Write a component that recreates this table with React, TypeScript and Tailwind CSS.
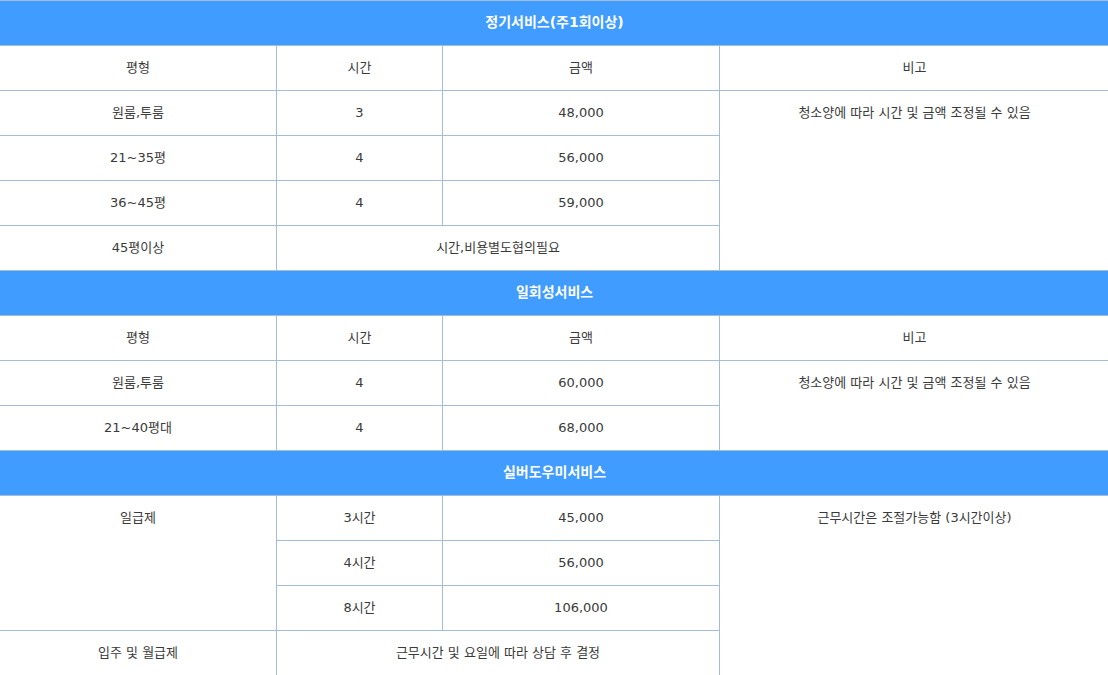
import React from "react";

const B = "border border-[#a3bdd6]";
const td = `${B} align-top text-center pt-[13px] pb-0 px-2 leading-[18px] text-[13px] text-[#3a3a3a]`;
const th = `${B} align-top text-center pt-[12px] leading-[18px] text-[14px] font-bold text-white bg-[#409cff] border-[#7db8f5]`;

function Head({ title }: { title: string }) {
  return (
    <tr className="h-[45px]">
      <td colSpan={4} className={th}>{title}</td>
    </tr>
  );
}

function Cols() {
  return (
    <tr className="h-[45px]">
      <td className={td}>평형</td>
      <td className={td}>시간</td>
      <td className={td}>금액</td>
      <td className={td}>비고</td>
    </tr>
  );
}

export default function App() {
  return (
    <div className="w-[1108px] h-[675px] overflow-hidden bg-white" style={{ fontFamily: '"DejaVu Sans", "Noto Sans CJK KR", sans-serif' }}>
      <table className="w-[1110px] -ml-px table-fixed border-collapse">
        <colgroup>
          <col className="w-[277px]" />
          <col className="w-[166px]" />
          <col className="w-[277px]" />
          <col className="w-[390px]" />
        </colgroup>
        <tbody>
          <Head title="정기서비스(주1회이상)" />
          <Cols />
          <tr className="h-[45px]">
            <td className={td}>원룸,투룸</td>
            <td className={td}>3</td>
            <td className={td}>48,000</td>
            <td className={td} rowSpan={4}>청소양에 따라 시간 및 금액 조정될 수 있음</td>
          </tr>
          <tr className="h-[45px]">
            <td className={td}>21~35평</td>
            <td className={td}>4</td>
            <td className={td}>56,000</td>
          </tr>
          <tr className="h-[45px]">
            <td className={td}>36~45평</td>
            <td className={td}>4</td>
            <td className={td}>59,000</td>
          </tr>
          <tr className="h-[45px]">
            <td className={td}>45평이상</td>
            <td className={td} colSpan={2}>시간,비용별도협의필요</td>
          </tr>
          <Head title="일회성서비스" />
          <Cols />
          <tr className="h-[45px]">
            <td className={td}>원룸,투룸</td>
            <td className={td}>4</td>
            <td className={td}>60,000</td>
            <td className={td} rowSpan={2}>청소양에 따라 시간 및 금액 조정될 수 있음</td>
          </tr>
          <tr className="h-[45px]">
            <td className={td}>21~40평대</td>
            <td className={td}>4</td>
            <td className={td}>68,000</td>
          </tr>
          <Head title="실버도우미서비스" />
          <tr className="h-[45px]">
            <td className={td} rowSpan={3}>일급제</td>
            <td className={td}>3시간</td>
            <td className={td}>45,000</td>
            <td className={td} rowSpan={4}>근무시간은 조절가능함 (3시간이상)</td>
          </tr>
          <tr className="h-[45px]">
            <td className={td}>4시간</td>
            <td className={td}>56,000</td>
          </tr>
          <tr className="h-[45px]">
            <td className={td}>8시간</td>
            <td className={td}>106,000</td>
          </tr>
          <tr className="h-[45px]">
            <td className={td}>입주 및 월급제</td>
            <td className={td} colSpan={2}>근무시간 및 요일에 따라 상담 후 결정</td>
          </tr>
        </tbody>
      </table>
    </div>
  );
}
